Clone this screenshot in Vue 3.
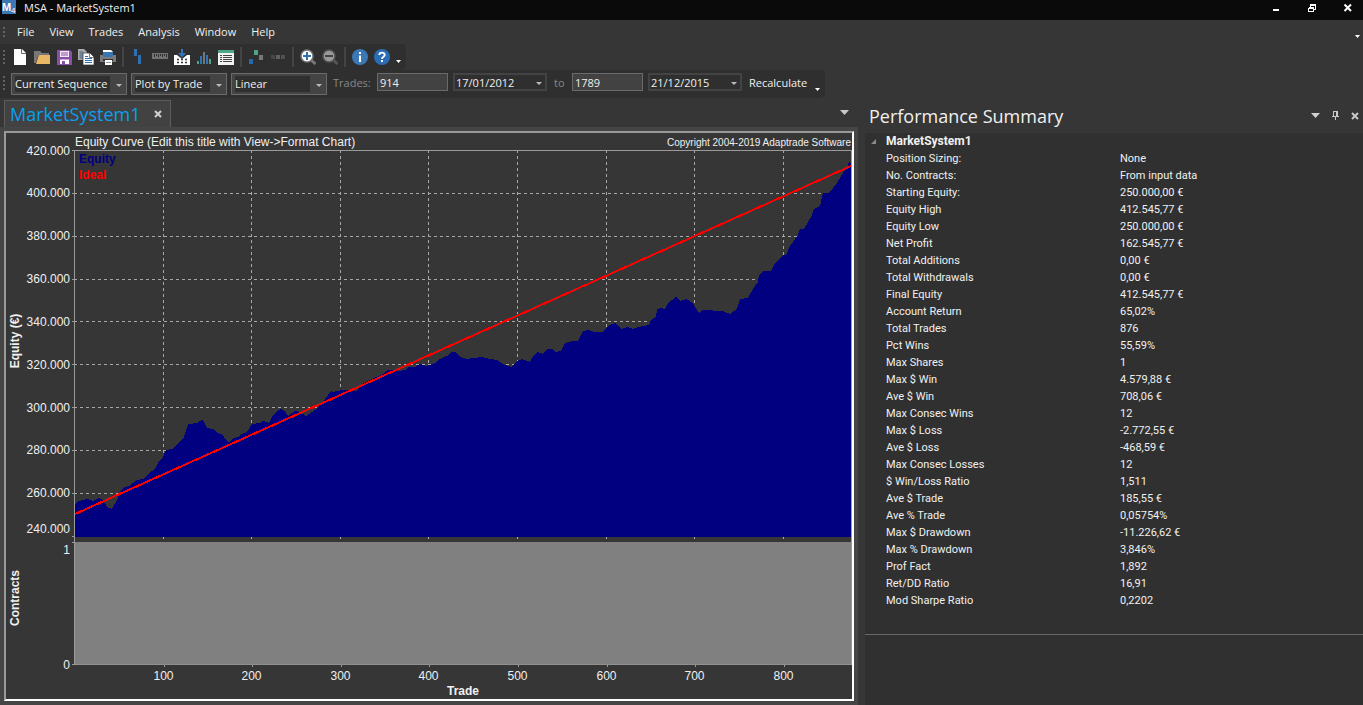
<script setup>
import { ref } from 'vue'

const menus = ['File', 'View', 'Trades', 'Analysis', 'Window', 'Help']

const sequence = ref('Current Sequence')
const plotBy = ref('Plot by Trade')
const scale = ref('Linear')
const fromTrade = ref('914')
const toTrade = ref('1789')
const fromDate = ref('17/01/2012')
const toDate = ref('21/12/2015')

const stats = [
  ['Position Sizing:', 'None'],
  ['No. Contracts:', 'From input data'],
  ['Starting Equity:', '250.000,00 €'],
  ['Equity High', '412.545,77 €'],
  ['Equity Low', '250.000,00 €'],
  ['Net Profit', '162.545,77 €'],
  ['Total Additions', '0,00 €'],
  ['Total Withdrawals', '0,00 €'],
  ['Final Equity', '412.545,77 €'],
  ['Account Return', '65,02%'],
  ['Total Trades', '876'],
  ['Pct Wins', '55,59%'],
  ['Max Shares', '1'],
  ['Max $ Win', '4.579,88 €'],
  ['Ave $ Win', '708,06 €'],
  ['Max Consec Wins', '12'],
  ['Max $ Loss', '-2.772,55 €'],
  ['Ave $ Loss', '-468,59 €'],
  ['Max Consec Losses', '12'],
  ['$ Win/Loss Ratio', '1,511'],
  ['Ave $ Trade', '185,55 €'],
  ['Ave % Trade', '0,05754%'],
  ['Max $ Drawdown', '-11.226,62 €'],
  ['Max % Drawdown', '3,846%'],
  ['Prof Fact', '1,892'],
  ['Ret/DD Ratio', '16,91'],
  ['Mod Sharpe Ratio', '0,2202']
]

// Plot space: 778 units wide, 515 high; equity occupies 0-387, contracts 392-514.
const W = 778
const H = 515
const xTicks = [100, 200, 300, 400, 500, 600, 700, 800].map((v) => ({
  v,
  x: Math.round((v * (W - 2)) / 876) + 0.5
}))
const yTicks = [
  { t: '420.000', y: 0, ly: 1 },
  { t: '400.000', y: 43, ly: 43 },
  { t: '380.000', y: 86, ly: 86 },
  { t: '360.000', y: 129, ly: 129 },
  { t: '340.000', y: 171, ly: 172 },
  { t: '320.000', y: 214, ly: 215 },
  { t: '300.000', y: 257, ly: 258 },
  { t: '280.000', y: 300, ly: 300 },
  { t: '260.000', y: 343, ly: 343 },
  { t: '240.000', y: 386, ly: 379 },
  { t: '1', y: 392, ly: 400 },
  { t: '0', y: 514, ly: 515 }
]
const pct = (n, total) => (n / total) * 100 + '%'

const curve = [
  [1, 354], [5, 351], [13, 349], [19, 351], [25, 348], [29, 350], [33, 357], [38, 359],
  [43, 350], [47, 340], [51, 337], [55, 336], [63, 330], [69, 329], [74, 324], [81, 319],
  [84, 313], [89, 307], [92, 300], [98, 299], [103, 294], [109, 289], [112, 281], [114, 274],
  [123, 273], [128, 270], [130, 272], [133, 278], [139, 279], [143, 283], [149, 285], [151, 289],
  [155, 292], [159, 288], [165, 287], [167, 284], [173, 282], [178, 274], [186, 273], [189, 271],
  [195, 273], [198, 267], [203, 261], [207, 259], [211, 261], [214, 266], [221, 261], [226, 262],
  [232, 266], [238, 262], [243, 259], [248, 252], [251, 249], [257, 241], [259, 242], [268, 240],
  [274, 240], [283, 241], [288, 234], [294, 231], [309, 224], [314, 220], [323, 221], [332, 220],
  [334, 217], [341, 217], [346, 214], [353, 216], [361, 213], [365, 209], [368, 208], [375, 205],
  [377, 202], [381, 202], [386, 207], [393, 209], [399, 208], [408, 207], [416, 209], [423, 210],
  [429, 214], [437, 217], [443, 211], [448, 209], [456, 212], [459, 206], [463, 202], [469, 204],
  [473, 199], [478, 199], [481, 202], [487, 201], [491, 193], [499, 191], [504, 191], [509, 181],
  [514, 180], [521, 182], [529, 182], [534, 176], [541, 173], [548, 179], [553, 177], [559, 179],
  [564, 177], [575, 175], [577, 170], [582, 167], [583, 159], [586, 158], [591, 159], [594, 153],
  [602, 147], [606, 151], [612, 149], [619, 153], [621, 157], [625, 163], [629, 160], [649, 161],
  [656, 164], [663, 159], [666, 149], [674, 148], [679, 139], [684, 132], [685, 125], [689, 121],
  [697, 121], [701, 113], [709, 105], [712, 105], [716, 96], [724, 85], [726, 79], [730, 79],
  [738, 65], [740, 59], [746, 56], [748, 47], [749, 43], [755, 43], [763, 33], [769, 23],
  [773, 18], [775, 12], [777, 14]
]
const area = 'M1 387 L' + curve.map((p) => p.join(' ')).join(' L') + ' L777 387 Z'
</script>

<template>
  <div class="app">
    <header class="titlebar">
      <svg class="logo" width="14" height="14" viewBox="0 0 14 14">
        <rect width="14" height="14" fill="#3c78b4" />
        <text x="0" y="11" font-family="Liberation Sans, Arial, sans-serif" font-size="11" font-weight="bold" fill="#fff">M</text>
        <text x="9" y="13" font-family="Liberation Sans, Arial, sans-serif" font-size="8" fill="#fff">4</text>
      </svg>
      <h1>MSA - MarketSystem1</h1>
      <div class="winbtns">
        <button aria-label="Minimize"><svg width="10" height="10" shape-rendering="crispEdges"><rect x="2" y="6" width="6" height="2" fill="#fff" /></svg></button>
        <button aria-label="Restore"><svg width="10" height="10" shape-rendering="crispEdges"><path d="M3 3V1H8V6H6M3 1.5H8M1 4V8H6V4H1M1 4.5H6" transform="translate(.5 .5)" fill="none" stroke="#fff" /></svg></button>
        <button aria-label="Close"><svg width="10" height="10"><path d="M1.500 1.500L8 8M8 1.500L1.500 8" stroke="#fff" stroke-width="2" /></svg></button>
      </div>
    </header>

    <nav class="menubar">
      <i class="grip short"></i>
      <button v-for="m in menus" :key="m">{{ m }}</button>
      <button class="menu-more" aria-label="Menu options"><svg width="6" height="3"><path d="M0 0H5L2.500 3Z" fill="#fff" /></svg></button>
    </nav>

    <div class="toolbar icons" role="toolbar" aria-label="Standard">
      <i class="grip"></i>
      <button aria-label="New">
        <svg viewBox="0 0 16 16"><path d="M2 0H10L14 4V16H2Z" fill="#fff" /><path d="M9.500 0V4.500H14" fill="none" stroke="#666" /></svg>
      </button>
      <button aria-label="Open">
        <svg viewBox="0 0 16 16"><path d="M0 2H6L8 4H15V7H4L2 14H0Z" fill="#777" /><path d="M4.500 7L6 6H16V15H2Z" fill="#e9b765" /></svg>
      </button>
      <button aria-label="Save">
        <svg viewBox="0 0 16 16"><path d="M1 1H14L16 3V16H1Z" fill="#8b4fa8" /><path d="M4 2H13V8H4Z" fill="#f2eaf5" /><path d="M5 4H12M5 6H12" stroke="#8b4fa8" /><path d="M4 10.500H13V15H4Z" fill="#fff" /><rect x="6" y="12" width="3" height="3" fill="#8b4fa8" /></svg>
      </button>
      <button aria-label="Copy">
        <svg viewBox="0 0 16 16"><path d="M0 0H6L9 3V11H0Z" fill="#a8a8a8" /><path d="M1.500 3H5M1.500 5H7M1.500 7H7M1.500 9H7" stroke="#3b5f82" /><path d="M5 4H12L16 8V16H5Z" fill="#fff" stroke="#303030" stroke-width=".7" /><path d="M11.500 4V8.500H16" fill="none" stroke="#777" /><path d="M7 7.500H10M7 9.500H14M7 11.500H14M7 13.500H14" stroke="#2e6da8" /></svg>
      </button>
      <button aria-label="Print">
        <svg viewBox="0 0 16 16"><path d="M3 1H11L13 3V6H3Z" fill="#fff" /><path d="M0 6H16V13H0Z" fill="#7b7b7b" /><path d="M3 3H13V7L12 8H4L3 7Z" fill="#3b76b4" /><path d="M3 10H13V12H3Z" fill="#333" /><path d="M5 11H12V16H5Z" fill="#fff" /><path d="M6 13.500H11" stroke="#999" /></svg>
      </button>
      <i class="sep"></i>
      <button aria-label="Trade list">
        <svg viewBox="0 0 16 16" shape-rendering="crispEdges"><path d="M4 0H7V7H4ZM8 6H11V15H8Z" fill="#3070b0" /></svg>
      </button>
      <button aria-label="Position sizing">
        <svg viewBox="0 0 16 16" shape-rendering="crispEdges"><path d="M0 4H16V10H0Z" fill="#727272" /><path d="M2.500 5V8M4.500 5V7M6.500 5V8M8.500 5V7M10.500 5V8M12.500 5V7M14.500 5V8" stroke="#303030" /></svg>
      </button>
      <button aria-label="Import trades">
        <svg viewBox="0 0 16 16"><path d="M0 6H16V16H0Z" fill="#fff" /><path d="M3 6H13L8 10Z" fill="#303030" /><path d="M7 0H9V4H12L8 8.500L4 4H7Z" fill="#3275b7" /><path d="M3 10.500H5M7 10.500H9M11 10.500H13M3 13.500H5M7 13.500H9M11 13.500H13" stroke="#333" stroke-width="1.500" /></svg>
      </button>
      <button aria-label="Distribution">
        <svg viewBox="0 0 16 16" shape-rendering="crispEdges"><path d="M1 12H3V15H1ZM14 10H15V15H13V10Z" fill="#4da583" /><path d="M4 7H6V15H4ZM10 6H12V15H10Z" fill="#3275b7" /><path d="M7 3H9V15H7Z" fill="#777" /></svg>
      </button>
      <button aria-label="Report">
        <svg viewBox="0 0 16 16" shape-rendering="crispEdges"><path d="M0 1H16V16H0Z" fill="#f3f3f3" /><path d="M0 1H16V4H0Z" fill="#4da583" /><path d="M2 6.500H4M5 6.500H14M2 8.500H4M5 8.500H14M2 10.500H4M5 10.500H14M2 12.500H4M5 12.500H14" stroke="#444" /></svg>
      </button>
      <i class="sep"></i>
      <button aria-label="Monte Carlo">
        <svg viewBox="0 0 16 16" shape-rendering="crispEdges"><rect x="6" y="1" width="4" height="5" fill="#4da583" /><rect x="11" y="6" width="4" height="5" fill="#777" /><rect x="1" y="10" width="4" height="5" fill="#2868ac" /></svg>
      </button>
      <button aria-label="Optimize">
        <svg viewBox="0 0 16 16" shape-rendering="crispEdges"><rect x="1" y="6" width="4" height="4" fill="#484848" /><rect x="6" y="6" width="4" height="4" fill="#606060" /><rect x="11" y="6" width="4" height="4" fill="#505050" /></svg>
      </button>
      <i class="sep"></i>
      <button aria-label="Zoom in">
        <svg viewBox="0 0 16 16"><path d="M11 11L15.500 15" stroke="#777" stroke-width="3" /><circle cx="7" cy="7" r="6" fill="#fff" stroke="#777" stroke-width="1.500" /><path d="M3 7H11M7 3V11" stroke="#2e70b0" stroke-width="2" /></svg>
      </button>
      <button aria-label="Zoom out">
        <svg viewBox="0 0 16 16"><path d="M11 11L15.500 15" stroke="#555" stroke-width="3" /><circle cx="7" cy="7" r="6" fill="#999" stroke="#555" stroke-width="1.500" /><path d="M3 7H11" stroke="#444" stroke-width="2" /></svg>
      </button>
      <i class="sep"></i>
      <button aria-label="About">
        <svg viewBox="0 0 16 16"><circle cx="8" cy="8" r="8" fill="#3c78b6" /><path d="M7 3H9V5H7ZM7 6.500H9V13H7Z" fill="#fff" /></svg>
      </button>
      <button aria-label="Help topics">
        <svg viewBox="0 0 16 16"><circle cx="8" cy="8" r="8" fill="#2a6db4" /><path d="M5.300 6C5.300 2.800 10.700 2.800 10.700 5.900C10.700 7.800 8 7.800 8 10" fill="none" stroke="#fff" stroke-width="1.900" /><rect x="7" y="11" width="2" height="2" fill="#fff" /></svg>
      </button>
      <button class="more" aria-label="Toolbar options"><svg viewBox="0 0 6 3"><path d="M0 0H5L2.500 3Z" fill="#fff" /></svg></button>
    </div>

    <div class="toolbar fields" role="toolbar" aria-label="Chart settings">
      <i class="grip"></i>
      <span class="combo wide"><select v-model="sequence" aria-label="Sequence"><option>Current Sequence</option></select><i class="arrow"></i></span>
      <span class="combo"><select v-model="plotBy" aria-label="Plot by"><option>Plot by Trade</option></select><i class="arrow"></i></span>
      <span class="combo"><select v-model="scale" aria-label="Scale"><option>Linear</option></select><i class="arrow"></i></span>
      <label class="lead" for="from">Trades:</label>
      <input id="from" v-model="fromTrade" type="text" />
      <span class="combo date"><select v-model="fromDate" aria-label="Start date"><option>17/01/2012</option></select><i class="arrow"></i></span>
      <label class="to" for="to">to</label>
      <input id="to" v-model="toTrade" type="text" />
      <span class="combo date"><select v-model="toDate" aria-label="End date"><option>21/12/2015</option></select><i class="arrow"></i></span>
      <button class="recalc">Recalculate</button>
      <button class="more" aria-label="Toolbar options"><svg viewBox="0 0 6 3"><path d="M0 0H5L2.500 3Z" fill="#fff" /></svg></button>
    </div>

    <main class="workspace">
      <section class="document">
        <div class="tabs">
          <div class="tab">
            <h2>MarketSystem1</h2>
            <button aria-label="Close tab"><svg width="8" height="8"><path d="M1 1L7 7M7 1L1 7" stroke="#d0d0d0" stroke-width="2" /></svg></button>
          </div>
          <button class="tab-list" aria-label="Document list"><svg width="10" height="5"><path d="M0 0H9L4.500 5Z" fill="#c8c8c8" /></svg></button>
        </div>
        <div class="mdi">
          <div class="chart">
            <div class="caption">
              <span class="chart-title">Equity Curve (Edit this title with View-&gt;Format Chart)</span>
              <span class="copyright">Copyright 2004-2019 Adaptrade Software</span>
            </div>
            <div class="ytitles">
              <span class="ytitle equity-title">Equity (€)</span>
              <span class="ytitle contracts-title">Contracts</span>
            </div>
            <div class="yaxis">
              <template v-for="t in yTicks" :key="t.t">
                <span :style="{ top: pct(t.ly, H) }">{{ t.t }}</span>
                <i :style="{ top: pct(t.y, H) }"></i>
              </template>
            </div>
            <div class="plot">
              <svg :viewBox="`0 0 ${W} ${H}`" preserveAspectRatio="none" shape-rendering="crispEdges">
                <g stroke="#a8a8a8" stroke-dasharray="3 3" fill="none">
                  <path v-for="t in yTicks.slice(1, 9)" :key="t.y" :d="`M0 ${t.y + 0.5}H777`" />
                  <path v-for="t in xTicks" :key="t.v" :d="`M${t.x} 0V387`" />
                </g>
                <path :d="area" fill="#000080" />
                <rect x="0" y="392" width="778" height="123" fill="#808080" />
                <path d="M0 514.500H778" stroke="#909090" />
                <path d="M1 364L777 16" stroke="#f00" stroke-width="2" />
                <path d="M0 .5H777.500V515M.5 0V515" stroke="#9a9a9a" fill="none" />
                <path v-for="t in xTicks" :key="'m' + t.v" :d="`M${t.x} 387v2`" stroke="#b0b0b0" />
              </svg>
              <div class="legend"><span class="eq">Equity</span><span class="ideal">Ideal</span></div>
            </div>
            <div class="xaxis">
              <template v-for="t in xTicks" :key="t.v">
                <i :style="{ left: pct(t.x, W) }"></i>
                <span :style="{ left: pct(t.x, W) }">{{ t.v }}</span>
              </template>
              <b>Trade</b>
            </div>
          </div>
        </div>
      </section>

      <aside class="summary">
        <header>
          <h2>Performance Summary</h2>
          <button aria-label="Panel menu"><svg width="9" height="5"><path d="M0 0H9L4.500 5Z" fill="#d0d0d0" /></svg></button>
          <button aria-label="Auto hide"><svg width="7" height="9" shape-rendering="crispEdges"><path d="M1 0H6V5H7V6H4V9H3V6H0V5H1ZM2 1V5H4V1Z" fill="#c8c8c8" fill-rule="evenodd" /></svg></button>
          <button aria-label="Close panel"><svg width="8" height="8"><path d="M1 1L7 7M7 1L1 7" stroke="#c8c8c8" stroke-width="2" /></svg></button>
        </header>
        <div class="props">
          <table>
            <colgroup><col class="c-exp" /><col class="c-name" /><col /></colgroup>
            <thead><tr><th class="exp"><svg width="6" height="6"><path d="M5 0V5H0Z" fill="#8a8a8a" /></svg></th><th colspan="2">MarketSystem1</th></tr></thead>
            <tbody>
              <tr v-for="[k, v] in stats" :key="k"><td></td><th scope="row">{{ k }}</th><td>{{ v }}</td></tr>
            </tbody>
          </table>
        </div>
      </aside>
    </main>
  </div>
</template>

<style>
body { background: #363636; }
</style>

<style scoped>
* { box-sizing: border-box; }
.app {
  min-height: 100vh; display: flex; flex-direction: column; background: #363636; color: #f0f0f0;
  font: 12px/16px "Open Sans", "Noto Sans", sans-serif;
}
button { border: 0; padding: 0; margin: 0; background: none; color: inherit; font: inherit; display: flex; align-items: center; }
svg { display: block; }
h1, h2 { margin: 0; font-weight: 400; }

.titlebar { height: 20px; background: #0a0a0a; display: flex; align-items: flex-start; padding-left: 2px; }
.titlebar h1 { flex: 1; font-size: 11px; line-height: 16px; margin-left: 8px; }
.winbtns { display: flex; gap: 26px; padding: 3px 10px 0 0; }

.menubar { height: 24px; display: flex; align-items: center; gap: 15px; padding: 0 3px; font-size: 11px; }
.menubar .grip { margin-right: -3px; }
.menu-more { margin: 8px -1px 0 auto; }

.grip { width: 2px; height: 14px; flex: none; background: repeating-linear-gradient(#626262 0 2px, transparent 2px 4px); }
.grip.short { height: 10px; }
.toolbar { align-self: flex-start; display: flex; background: #2f2f2f; border-radius: 0 5px 5px 0; padding-left: 3px; }
.icons { height: 26px; align-items: center; gap: 6px; padding-right: 4px; }
.icons .grip { margin-right: 1px; }
.icons button svg { width: 16px; height: 16px; }
.sep { width: 2px; height: 20px; background: #444; }
.toolbar .more { align-self: flex-end; padding-bottom: 7px; width: 6px; }
.toolbar .more svg { width: 6px; height: 3px; }

.fields { height: 28px; padding-top: 3px; padding-right: 4px; font-size: 11px; }
.fields .grip { margin: 3px 6px 0 0; }
.combo { position: relative; width: 96px; height: 22px; margin-right: 4px; }
.combo.wide { width: 116px; }
.combo select {
  appearance: none; width: 100%; height: 100%; padding: 0 0 0 3px; border: 1px solid #6a6a6a; border-radius: 0;
  background: linear-gradient(#2f2f2f, #2f2f2f) 3px 2px / calc(100% - 19px) 16px no-repeat #444; color: #f0f0f0; font: inherit;
}
.arrow { position: absolute; right: 5px; top: 50%; border: 3px solid transparent; border-top-color: #bbb; border-bottom: 0; pointer-events: none; }
.combo.date { width: 94px; height: 18px; margin-right: 7px; }
.combo.date select { border: 2px solid #434343; background: #2f2f2f; padding: 0 0 0 1px; }
.fields label { color: #888; line-height: 20px; }
.fields .lead { width: 44px; margin: 0 0 0 2px; }
.fields .to { width: 18px; }
.fields input { width: 71px; height: 18px; margin: 0 5px 0 0; padding: 0 2px; border: 1px solid #6a6a6a; border-radius: 0; background: #424242; color: #f0f0f0; font: inherit; }
.recalc { height: 20px; width: 59px; margin-right: 7px; }

.workspace { flex: 1; display: flex; gap: 7px; min-height: 0; }
.document { flex: 1; display: flex; flex-direction: column; min-width: 0; }
.tabs { display: flex; height: 29px; padding-left: 4px; align-items: stretch; }
.tab { display: flex; align-items: center; gap: 14px; margin-top: 2px; padding: 0 8px 0 5px; border: 1px solid #5c5c5c; border-bottom: 0; background: #424242; }
.tab h2 { color: #0a9ff0; font-size: 18px; line-height: 24px; }
.tab-list { margin: 0 8px 0 auto; }
.mdi { flex: 1; display: flex; padding: 4px; background: #454545; }
.chart {
  flex: 1; display: grid; grid-template: 17px 1fr 34px / 18px 50px 1fr; background: #363636;
  border: 2px solid #fff; border-top-color: #999; border-left-color: #999;
  font: 12px/14px "Liberation Sans", Arial, sans-serif;
}
.caption { grid-area: 1 / 3; display: flex; justify-content: space-between; line-height: 18px; padding: 0 1px; white-space: nowrap; }
.copyright { font-size: 10px; line-height: 20px; }
.ytitles { grid-area: 2 / 1; position: relative; font-weight: 700; }
.ytitle { position: absolute; left: 2px; writing-mode: vertical-rl; transform: translateY(-50%) rotate(180deg); white-space: nowrap; }
.equity-title { top: 37%; }
.contracts-title { top: 87%; }
.yaxis { grid-area: 2 / 2; position: relative; }
.yaxis span { position: absolute; right: 4px; transform: translateY(-50%); }
.yaxis i { position: absolute; right: 0; width: 2px; height: 1px; background: #9a9a9a; }
.plot { grid-area: 2 / 3; position: relative; }
.plot svg { position: absolute; width: 100%; height: 100%; }
.legend { position: relative; display: flex; flex-direction: column; padding: 1px 0 0 5px; font-weight: 700; line-height: 16px; }
.eq { color: #000080; }
.ideal { color: #f00; }
.xaxis { grid-area: 3 / 3; position: relative; text-align: center; }
.xaxis span { position: absolute; top: 4px; transform: translateX(-50%); }
.xaxis i { position: absolute; top: 0; width: 1px; height: 2px; background: #9a9a9a; }
.xaxis b { display: block; padding-top: 19px; }

.summary { width: 498px; flex: none; display: flex; flex-direction: column; }
.summary header { height: 35px; display: flex; align-items: center; padding: 0 4px; gap: 12px; }
.summary h2 { flex: 1; font-size: 18px; line-height: 24px; }
.props { flex: 1; background: #303030; }
.props table { width: 100%; border-collapse: collapse; table-layout: fixed; border-bottom: 1px solid #686868; font: 11px/17px Roboto, "Liberation Sans", sans-serif; }
.props tbody::after { content: ""; display: block; height: 25px; }
.props th, .props td { padding: 0; height: 17px; text-align: left; font-weight: 400; }
.props thead th { font-weight: 700; font-size: 12px; }
.props .exp { padding-left: 6px; }
.c-exp { width: 21px; }
.c-name { width: 234px; }
</style>
